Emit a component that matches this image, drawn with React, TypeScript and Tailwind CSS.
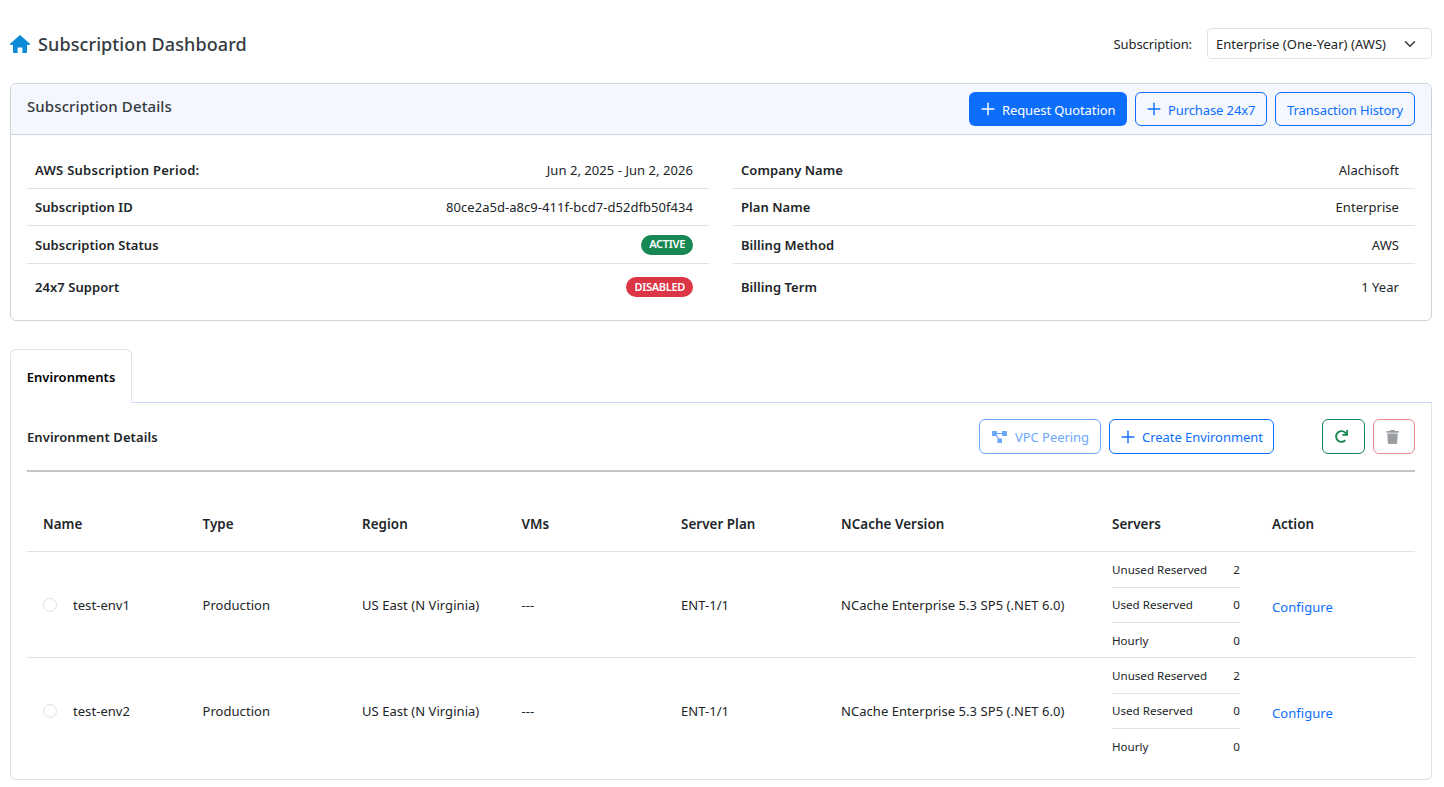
import { ChevronDown, Plus } from "lucide-react";
import { FaRedo, FaTrash } from "react-icons/fa";

const leftDetails = [
  { label: "AWS Subscription Period:", value: "Jun 2, 2025 - Jun 2, 2026", rowClass: "h-[37px]", labelClass: "tracking-[0.25px]" },
  { label: "Subscription ID", value: "80ce2a5d-a8c9-411f-bcd7-d52dfb50f434", rowClass: "h-[37px]" },
  { label: "Subscription Status", badge: "ACTIVE", rowClass: "h-[38px]" },
  { label: "24x7 Support", badge: "DISABLED", rowClass: "h-[46px]" },
];

const rightDetails = [
  { label: "Company Name", value: "Alachisoft", rowClass: "h-[37px]" },
  { label: "Plan Name", value: "Enterprise", rowClass: "h-[37px]" },
  { label: "Billing Method", value: "AWS", rowClass: "h-[38px]" },
  { label: "Billing Term", value: "1 Year", rowClass: "h-[46px]" },
];

const environments = ["test-env1", "test-env2"];
const columns = ["Name", "Type", "Region", "VMs", "Server Plan", "NCache Version", "Servers", "Action"];
const gridCols = "grid grid-cols-[159.5px_159.5px_159.5px_159.5px_160px_271px_160px_1fr]";

type Detail = { label: string; value?: string; badge?: string; rowClass: string; labelClass?: string };

function DetailRow({ item, last }: { item: Detail; last: boolean }) {
  return (
    <div className={`flex items-center justify-between pl-2 pr-4 ${item.rowClass} ${last ? "" : "border-b border-[#dee2e6]"}`}>
      <span className={`pt-[2px] font-semibold text-[#212529] ${item.labelClass ?? ""}`}>{item.label}</span>
      {item.value && <span className="pt-[2px] text-[#212529]">{item.value}</span>}
      {item.badge && (
        <span
          className={`flex h-5 items-center rounded-full px-2 text-[11px] font-semibold tracking-[-0.3px] text-white ${
            item.badge === "ACTIVE" ? "bg-[#198754]" : "bg-[#dc3545]"
          }`}
        >
          {item.badge}
        </span>
      )}
    </div>
  );
}

function Servers() {
  return (
    <div className="w-[128px] text-[11.6px] tracking-normal text-[#212529]">
      <div className="flex h-[36px] items-center justify-between border-b border-[#dee2e6]">
        <span>Unused Reserved</span>
        <span>2</span>
      </div>
      <div className="flex h-[35px] items-center justify-between border-b border-[#dee2e6]">
        <span>Used Reserved</span>
        <span>0</span>
      </div>
      <div className="flex h-[35px] items-center justify-between">
        <span>Hourly</span>
        <span>0</span>
      </div>
    </div>
  );
}

function HomeIcon() {
  return (
    <svg viewBox="0 0 20 18" className="h-[18px] w-[20px] text-[#0a8ad6]" fill="currentColor">
      <path d="M10 0 19.6 8.6a.8.8 0 0 1-.5 1.4H17v7a1 1 0 0 1-1 1h-3.6v-5.5H7.6V18H4a1 1 0 0 1-1-1v-7H.9a.8.8 0 0 1-.5-1.4Z" />
    </svg>
  );
}

function PeeringIcon() {
  return (
    <svg viewBox="0 0 15 12" className="h-[12px] w-[15px]" fill="currentColor" stroke="currentColor">
      <rect x="0" y="0" width="5" height="5" rx="0.5" stroke="none" />
      <rect x="10" y="0" width="5" height="5" rx="0.5" stroke="none" />
      <rect x="5.5" y="7.5" width="4.5" height="4.5" rx="0.5" stroke="none" />
      <path d="M3 2.5h9M3 3l4.5 6" strokeWidth="1.2" fill="none" />
    </svg>
  );
}

export default function App() {
  return (
    <div className="min-h-[787px] bg-white pl-[10px] pr-3 pt-7 font-['Noto_Sans',sans-serif] text-[13px] tracking-[0.05px] text-[#212529]">
      <div className="flex h-[31px] items-center justify-between">
        <div className="flex items-center gap-2">
          <HomeIcon />
          <h1 className="pt-[2px] text-[18px] font-medium tracking-[0.1px] text-[#343a40]">Subscription Dashboard</h1>
        </div>
        <div className="flex items-center gap-[15px]">
          <span className="pt-[2px] tracking-[-0.1px]">Subscription:</span>
          <div className="flex h-[31px] w-[225px] items-center justify-between rounded border border-[#dee2e6] pl-2 pr-3">
            <span className="pt-[2px]">Enterprise (One-Year) (AWS)</span>
            <ChevronDown className="h-[18px] w-[18px] text-[#343a40]" />
          </div>
        </div>
      </div>

      <section className="mt-6 overflow-hidden rounded-md border border-[#ced4da]">
        <div className="flex h-[51px] items-center justify-between border-b border-[#ced4da] bg-[#f4f7fe] px-4">
          <h2 className="mb-[6px] text-[15px] font-medium tracking-[0.1px] text-[#343a40]">Subscription Details</h2>
          <div className="flex gap-2 tracking-[-0.1px]">
            <button className="flex h-[34px] w-[158px] items-center gap-1 rounded-md bg-[#0d6efd] pl-[9px] text-white">
              <Plus className="h-5 w-5" strokeWidth={1.7} />
              <span className="pt-[3px]">Request Quotation</span>
            </button>
            <button className="flex h-[34px] w-[132px] items-center gap-1 rounded-md border border-[#0d6efd] pl-[8px] text-[#0d6efd]">
              <Plus className="h-5 w-5" strokeWidth={1.7} />
              <span className="pt-[3px]">Purchase 24x7</span>
            </button>
            <button className="flex h-[34px] w-[140px] items-center justify-center rounded-md border border-[#0d6efd] text-[#0d6efd]">
              <span className="pt-[3px]">Transaction History</span>
            </button>
          </div>
        </div>
        <div className="grid grid-cols-2 gap-6 px-4 pt-[17px] pb-[10px]">
          <div>
            {leftDetails.map((item, i) => (
              <DetailRow key={item.label} item={item} last={i === leftDetails.length - 1} />
            ))}
          </div>
          <div>
            {rightDetails.map((item, i) => (
              <DetailRow key={item.label} item={item} last={i === rightDetails.length - 1} />
            ))}
          </div>
        </div>
      </section>

      <div className="mt-7">
        <div className="flex items-end">
          <div className="flex h-[54px] w-[122px] items-center justify-center rounded-t-md border border-b-0 border-[#dee2e6] pt-[2px] font-semibold text-black">
            Environments
          </div>
          <div className="flex-1 border-b border-[#c7d7f9]" />
        </div>
        <div className="rounded-b-md border border-t-0 border-[#dee2e6] px-4 pb-[15px]">
          <div className="flex h-[69px] items-center justify-between border-b-2 border-[#c4c7ca]">
            <h3 className="pt-[3px] font-semibold tracking-[0.1px] text-[#212529]">Environment Details</h3>
            <div className="flex tracking-[-0.05px]">
              <button className="flex h-[35px] w-[122px] items-center gap-2 rounded-md border border-[#6ea8fe] pl-3 text-[#6ea8fe]">
                <PeeringIcon />
                <span className="pt-[3px]">VPC Peering</span>
              </button>
              <button className="ml-2 flex h-[35px] w-[165px] items-center gap-1 rounded-md border border-[#0d6efd] pl-[8px] text-[#0d6efd]">
                <Plus className="h-5 w-5" strokeWidth={1.7} />
                <span className="pt-[3px]">Create Environment</span>
              </button>
              <button className="ml-12 flex h-[35px] w-[43px] items-center justify-center rounded-md border border-[#198754] pr-1 text-[#198754]">
                <FaRedo className="h-[13px] w-[13px]" />
              </button>
              <button className="ml-2 flex h-[35px] w-[42px] items-center justify-center rounded-md border border-[#ea868f] pr-1 text-[#9a9da1]">
                <FaTrash className="h-[14px] w-[13px]" />
              </button>
            </div>
          </div>

          <div className={`${gridCols} mt-5 h-[60px] items-center border-b border-[#dee2e6] pt-[6px] text-[13.4px] font-semibold`}>
            {columns.map((col) => (
              <div key={col} className="pl-4">
                {col}
              </div>
            ))}
          </div>

          {environments.map((env, i) => (
            <div
              key={env}
              className={`${gridCols} h-[106px] items-center ${i === 0 ? "border-b border-[#dee2e6]" : ""}`}
            >
              <div className="flex items-center gap-[16px] pl-4">
                <span className="h-[14px] w-[14px] rounded-full border border-[#dee2e6]" />
                <span className="pt-[2px]">{env}</span>
              </div>
              <div className="pl-4 pt-[2px]">Production</div>
              <div className="pl-4 pt-[2px]">US East (N Virginia)</div>
              <div className="pl-4 pt-[2px]">---</div>
              <div className="pl-4 pt-[2px]">ENT-1/1</div>
              <div className="pl-4 pt-[2px]">NCache Enterprise 5.3 SP5 (.NET 6.0)</div>
              <div className="pl-4">
                <Servers />
              </div>
              <div className="pl-4 pt-[6px] text-[#0d6efd]">Configure</div>
            </div>
          ))}
        </div>
      </div>
    </div>
  );
}
